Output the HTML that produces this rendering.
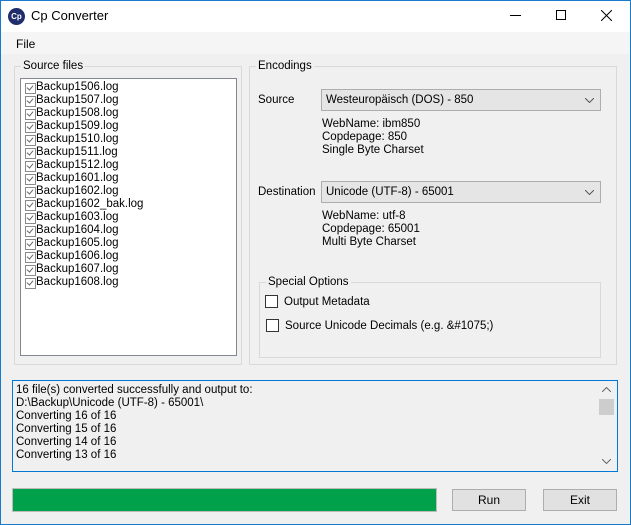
<!DOCTYPE html>
<html><head><meta charset="utf-8"><style>
*{margin:0;padding:0;box-sizing:border-box}
body{width:631px;height:525px;background:#f0f0f0;font-family:"Liberation Sans",sans-serif;font-size:11px;color:#000;position:relative;overflow:hidden}
.a{position:absolute;white-space:nowrap}
.gb{position:absolute;border:1px solid #d9d9d9}
.lg{position:absolute;background:#f0f0f0;padding:0 2px;font-size:11.5px;line-height:13px}
.combo{position:absolute;background:#e5e5e5;border:1px solid #adadad;font-size:11.5px;line-height:20px;padding-left:4px}
.combo svg{position:absolute;right:6px;top:8px}
.cb{position:absolute;width:13px;height:13px;border:1px solid #333;background:#fff}
.btn{position:absolute;background:#e1e1e1;border:1px solid #adadad;text-align:center;font-size:12px;line-height:21px}
.li{position:absolute;left:24px;font-size:11.5px;line-height:13px;padding-left:12px}
.li::before{content:"";position:absolute;left:1px;top:2px;width:9px;height:9px;border:1px solid #8a8a8a}
.li::after{content:"";position:absolute;left:4px;top:3px;width:3px;height:5px;border-right:1px solid #666;border-bottom:1px solid #666;transform:rotate(40deg)}
</style></head><body>
<div class="a" style="left:0;top:0;width:631px;height:32px;background:#fff"></div>
<div class="a" style="left:8px;top:8px;width:17px;height:17px;border-radius:50%;background:#1f2d6b;color:#fff;font-size:8px;font-weight:bold;line-height:17px;text-align:center">Cp</div>
<div class="a" style="left:31px;top:8px;font-size:13px">Cp Converter</div>
<div class="a" style="left:510px;top:15px;width:11px;height:1px;background:#000"></div>
<div class="a" style="left:556px;top:10px;width:10px;height:10px;border:1px solid #000"></div>
<svg class="a" style="left:601px;top:10px" width="11" height="11"><path d="M0 0L11 11M11 0L0 11" stroke="#000" stroke-width="1"/></svg>
<div class="a" style="left:0;top:32px;width:631px;height:22px;background:#f5f5f5"></div>
<div class="a" style="left:16px;top:37px;font-size:12px">File</div>

<div class="gb" style="left:14px;top:66px;width:228px;height:299px"></div>
<div class="lg" style="left:21px;top:60px">Source files</div>
<div class="a" style="left:20px;top:78px;width:217px;height:278px;background:#fff;border:1px solid #828790"></div>
<div class="li" style="top:81px">Backup1506.log</div>
<div class="li" style="top:94px">Backup1507.log</div>
<div class="li" style="top:107px">Backup1508.log</div>
<div class="li" style="top:120px">Backup1509.log</div>
<div class="li" style="top:133px">Backup1510.log</div>
<div class="li" style="top:146px">Backup1511.log</div>
<div class="li" style="top:159px">Backup1512.log</div>
<div class="li" style="top:172px">Backup1601.log</div>
<div class="li" style="top:185px">Backup1602.log</div>
<div class="li" style="top:198px">Backup1602_bak.log</div>
<div class="li" style="top:211px">Backup1603.log</div>
<div class="li" style="top:224px">Backup1604.log</div>
<div class="li" style="top:237px">Backup1605.log</div>
<div class="li" style="top:250px">Backup1606.log</div>
<div class="li" style="top:263px">Backup1607.log</div>
<div class="li" style="top:276px">Backup1608.log</div>

<div class="gb" style="left:249px;top:66px;width:368px;height:299px"></div>
<div class="lg" style="left:256px;top:60px">Encodings</div>
<div class="a" style="left:258px;top:94px;font-size:11.5px">Source</div>
<div class="combo" style="left:321px;top:89px;width:280px;height:22px">Westeuropäisch (DOS) - 850<svg width="9" height="5"><path d="M0 0L4.5 4.5L9 0" fill="none" stroke="#555"/></svg></div>
<div class="a" style="left:322px;top:118px;font-size:11.5px;line-height:13px">WebName: ibm850<br>Copdepage: 850<br>Single Byte Charset</div>
<div class="a" style="left:258px;top:186px;font-size:11.5px">Destination</div>
<div class="combo" style="left:321px;top:181px;width:280px;height:22px">Unicode (UTF-8) - 65001<svg width="9" height="5"><path d="M0 0L4.5 4.5L9 0" fill="none" stroke="#555"/></svg></div>
<div class="a" style="left:322px;top:210px;font-size:11.5px;line-height:13px">WebName: utf-8<br>Copdepage: 65001<br>Multi Byte Charset</div>

<div class="gb" style="left:259px;top:282px;width:342px;height:76px"></div>
<div class="lg" style="left:266px;top:276px">Special Options</div>
<div class="cb" style="left:265px;top:295px"></div>
<div class="a" style="left:284px;top:296px;font-size:11.5px">Output Metadata</div>
<div class="cb" style="left:266px;top:319px"></div>
<div class="a" style="left:285px;top:320px;font-size:11.5px">Source Unicode Decimals (e.g. &amp;#1075;)</div>

<div class="a" style="left:12px;top:380px;width:606px;height:92px;border:1px solid #0078d7;background:#f0f0f0"></div>
<div class="a" style="left:16px;top:384px;font-size:11.5px;line-height:13px">16 file(s) converted successfully and output to:<br>D:\Backup\Unicode (UTF-8) - 65001\<br>Converting 16 of 16<br>Converting 15 of 16<br>Converting 14 of 16<br>Converting 13 of 16</div>
<svg class="a" style="left:602px;top:387px" width="9" height="5"><path d="M0 5L4.5 0.5L9 5" fill="none" stroke="#666"/></svg>
<div class="a" style="left:599px;top:399px;width:15px;height:16px;background:#cdcdcd"></div>
<svg class="a" style="left:602px;top:459px" width="9" height="5"><path d="M0 0L4.5 4.5L9 0" fill="none" stroke="#666"/></svg>

<div class="a" style="left:12px;top:488px;width:425px;height:24px;border:1px solid #bcbcbc;background:#00a14b"></div>
<div class="btn" style="left:452px;top:489px;width:74px;height:22px">Run</div>
<div class="btn" style="left:543px;top:489px;width:74px;height:22px">Exit</div>

<div class="a" style="left:0;top:0;width:631px;height:525px;border:1px solid #1979ca"></div>
</body></html>
